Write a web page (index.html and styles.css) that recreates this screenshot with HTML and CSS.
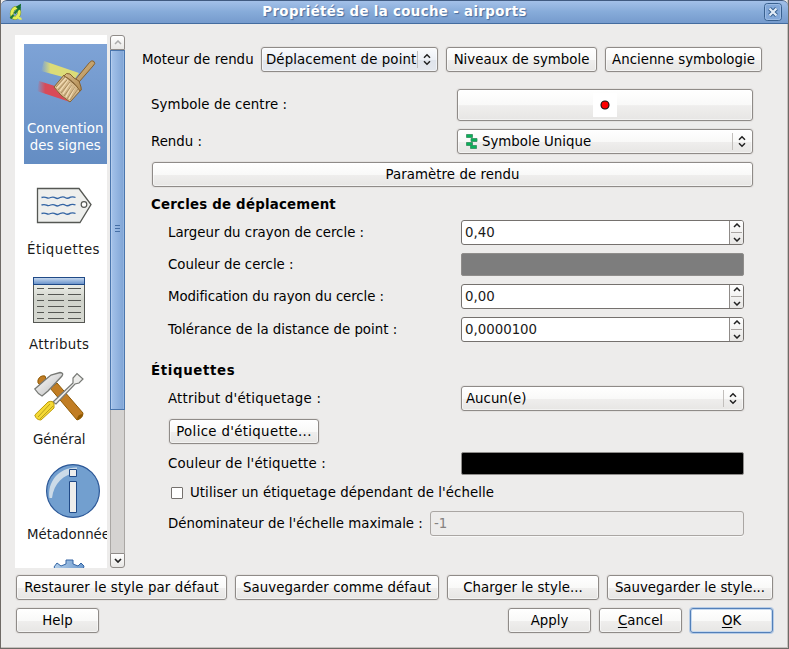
FILE: index.html
```html
<!DOCTYPE html>
<html lang="fr">
<head>
<meta charset="utf-8">
<title>Propriétés de la couche - airports</title>
<link rel="stylesheet" href="styles.css">
</head>
<body>
<div class="window">
  <header class="titlebar">
    <svg class="app-icon" width="16" height="18" viewBox="0 0 16 18"><ellipse cx="6.500" cy="10" rx="3.600" ry="5" fill="none" stroke="#65883c" stroke-width="4" transform="rotate(14 6.500 10)"/><ellipse cx="6.500" cy="10" rx="3.600" ry="5" fill="none" stroke="#e5ee55" stroke-width="3" transform="rotate(14 6.500 10)"/><path d="M8 12q2 4.500 4.500 3.500" fill="none" stroke="#e5ee55" stroke-width="2.200"/><path d="M1.500 15.500L4.500 12M5.500 10.500L11 4" stroke="#1f7a38" stroke-width="2.200"/><path d="M6.500 4L12 .8L11.500 7.500Z" fill="#126b2b"/></svg>
    <h1>Propriétés de la couche - airports</h1>
    <svg class="close" width="18" height="18" viewBox="0 0 18 18"><rect x=".5" y=".5" width="17" height="17" rx="3" fill="#83a8d9" stroke="#39608f"/><rect x="1.500" y="1.500" width="15" height="15" rx="2" fill="none" stroke="#9dbce4"/><path d="M5.500 5.500l7 7M12.500 5.500l-7 7" stroke="#38608f" stroke-width="4"/><path d="M5.500 5.500l7 7M12.500 5.500l-7 7" stroke="#e4edf8" stroke-width="2.200"/></svg>
  </header>
  <div class="body">
    <nav class="list">
      <div class="item selected">
        <svg width="60" height="44" viewBox="0 0 60 44">
          <defs><linearGradient id="y"><stop offset="0" stop-color="#dcdc78" stop-opacity="0"/><stop offset=".25" stop-color="#dcdc78"/></linearGradient><linearGradient id="r"><stop offset="0" stop-color="#d84a58" stop-opacity="0"/><stop offset=".25" stop-color="#d84a58"/></linearGradient><linearGradient id="wood" x2="1" y2="1"><stop stop-color="#d9bb88"/><stop offset="1" stop-color="#b08a52"/></linearGradient></defs>
          <path d="M8 2L43 14L38 21L5 12Z" fill="url(#y)"/><path d="M3 22L22 28L34 43L1 32Z" fill="url(#r)"/>
          <path d="M39 21L53.500 3.500Q56 .500 58 2.500T57 7L43 23Z" fill="url(#wood)" stroke="#85602e"/>
          <path d="M28 16L18 28Q24 37 34 43L45 31Z" fill="#d4b88a" stroke="#85602e"/>
          <path d="M30 19L21 29M32 21L24 32M34 24L27 35M36 26L30 38M39 28L33 40" stroke="#f3ddb6" stroke-width="1.200"/><path d="M29 18L20 28M31 21L22 31M34 23L25 34M36 26L28 37M39 28L31 40M42 30L34 41" stroke="#8b6e44" stroke-width=".6"/>
          <path d="M28 17Q30 13 34 15L38 19L43 22L45 28Q46 32 44 32Q37 21 28 17Z" fill="url(#wood)" stroke="#85602e"/>
        </svg>
        <span>Convention<br>des signes</span>
      </div>
      <div class="item labels">
        <svg width="57" height="37" viewBox="0 0 57 37"><path d="M1.500 1.500H43L55 17.500L44 35.500H1.500Z" fill="#eeefed" stroke="#555753" stroke-width="1.300"/><circle cx="48" cy="17.500" r="2.800" fill="#fff" stroke="#555753" stroke-width="1.200"/><g fill="none" stroke="#3465a4" stroke-width="1.300"><path id="w" d="M5.500 10.500q3-.8 5 .2t4-.2q3-1 5 .4t5-.6q3-1 5 .4t5-.6q3-.7 5 .4"/><use href="#w" y="7.500"/><use href="#w" y="16"/></g></svg>
        <span>Étiquettes</span>
      </div>
      <div class="item attrs">
        <svg width="52" height="46" viewBox="0 0 52 46"><defs><linearGradient id="t" x2="0" y2="1"><stop stop-color="#cbdcf0"/><stop offset="1" stop-color="#648fc9"/></linearGradient><linearGradient id="g" x2="0" y2="1"><stop stop-color="#eceee8"/><stop offset=".4" stop-color="#d0d3cb"/><stop offset="1" stop-color="#d7d9d2"/></linearGradient></defs><rect x=".5" y="7.500" width="51" height="38" fill="url(#g)" stroke="#555753"/><rect x=".5" y=".5" width="51" height="7" fill="url(#t)" stroke="#204a87"/><path d="M4 11.500h7m4 0h16m4 0h13M4 17.500h7m4 0h16m4 0h13M4 23.500h7m4 0h16m4 0h13M4 29.500h7m4 0h16m4 0h13M4 35.500h7m4 0h16m4 0h13M4 41.500h7m4 0h16m4 0h13" stroke="#555753"/></svg>
        <span>Attributs</span>
      </div>
      <div class="item general">
        <svg width="52" height="52" viewBox="0 0 52 52"><defs><linearGradient id="m" x2="1" y2="1"><stop stop-color="#fff"/><stop offset="1" stop-color="#b9b9b9"/></linearGradient></defs><path d="M16 17L23 12L49 42Q49 47 43 49Z" fill="#c17d24" stroke="#8f5902"/><path d="M43 49Q43 43 49 43Q49 47 43 49Z" fill="#8f5902"/><path d="M4 9Q6 4 11 5L12 8L6 14Q3 12 4 9Z" fill="#c17d24" stroke="#8f5902"/><path d="M.8 18L11 9L17 4L26 1.500Q30 2 28 5L14 20L8 25Q4 23 .8 18Z" fill="url(#m)" stroke="#777975" stroke-width="1.300"/><path d="M19 31L39 12L39 7L43 2.500L49 8L45 12L41 13L22 33Z" fill="#ededeb" stroke="#777975" stroke-width="1.200"/><path d="M.8 44L14 31Q19 29 20 33V37L7 49Q2 49 .8 44Z" fill="#f5d934" stroke="#bd9c08"/><path d="M4 46L16 33M6 48L19 35" stroke="#b9a01d"/></svg>
        <span>Général</span>
      </div>
      <div class="item meta">
        <svg width="54" height="54" viewBox="0 0 54 54"><circle cx="27" cy="27" r="26.400" fill="#729fcf" stroke="#2b5797" stroke-width="1.200"/><path d="M3.500 34C1 18 13 3 31 3.500V8C17 11 8 19 6 34Z" fill="#d6e1ea" opacity=".9"/><path d="M23.500 5.500h7v7h-7zM23.500 17.500h7v31h-7z" fill="#eeeeec" stroke="#204a87"/></svg>
        <span>Métadonnées</span>
      </div>
      <div class="item gear">
        <svg width="34" height="34" viewBox="0 0 34 34"><defs><linearGradient id="b"><stop stop-color="#b4cfea"/><stop offset="1" stop-color="#6795cb"/></linearGradient></defs><path d="M13 5V1H20V5L25 7L28 4L31 7L30 11L33 15V20L28 28H6L1 20V12L3 11L1 8L4 4L8 7Z" fill="url(#b)" stroke="#3465a4"/></svg>
      </div>
    </nav>
    <div class="scroll">
      <div class="sb up"><svg width="8" height="5" viewBox="0 0 8 5"><path d="M1 4L4 1L7 4" fill="none" stroke="#aaa" stroke-width="1.500"/></svg></div>
      <div class="thumb"><i></i><i></i><i></i></div>
      <div class="track"></div>
      <div class="sb down"><svg width="8" height="5" viewBox="0 0 8 5"><path d="M1 1L4 4L7 1" fill="none" stroke="#222" stroke-width="1.700"/></svg></div>
    </div>
    <main class="panel">
      <div class="row top">
        <span class="lbl">Moteur de rendu</span>
        <div class="combo tinted"><span>Déplacement de point</span><svg class="ud" width="8" height="12" viewBox="0 0 8 12"><path d="M1 4.300L4 1.300L7 4.300M1 7.700L4 10.700L7 7.700" /></svg></div>
        <button class="b-niv">Niveaux de symbole</button>
        <button class="b-anc">Ancienne symbologie</button>
      </div>
      <div class="row center"><span class="lbl">Symbole de centre :</span><button class="symbol"><span class="chip"><svg width="10" height="10" viewBox="0 0 10 10"><circle cx="5" cy="5" r="4" fill="#f00" stroke="#111" stroke-width="1.100"/></svg></span></button></div>
      <div class="row rendu"><span class="lbl">Rendu :</span>
        <div class="combo"><svg class="green" width="12" height="15" viewBox="0 0 12 15"><path d="M.5.5h6v3h-6zM5 4.500h6v3H5zM.5 8.500h6v3h-6zM4.500 11.500h6v3h-6z" fill="#08b15a" stroke="#338b5c" stroke-width=".8"/></svg><span>Symbole Unique</span><svg class="ud" width="8" height="12" viewBox="0 0 8 12"><path d="M1 4.300L4 1.300L7 4.300M1 7.700L4 10.700L7 7.700"/></svg></div></div>
      <button class="param">Paramètre de rendu</button>
      <h2 class="h-circles">Cercles de déplacement</h2>
      <div class="row sub"><span class="lbl">Largeur du crayon de cercle :</span><div class="spin"><span>0,40</span><div class="arrows"><svg width="8" height="5" viewBox="0 0 8 5"><path d="M1 4L4 1L7 4"/></svg><hr><svg width="8" height="5" viewBox="0 0 8 5"><path d="M1 1L4 4L7 1"/></svg></div></div></div>
      <div class="row sub"><span class="lbl">Couleur de cercle :</span><div class="color gray"></div></div>
      <div class="row sub modif"><span class="lbl">Modification du rayon du cercle :</span><div class="spin"><span>0,00</span><div class="arrows"><svg width="8" height="5" viewBox="0 0 8 5"><path d="M1 4L4 1L7 4"/></svg><hr><svg width="8" height="5" viewBox="0 0 8 5"><path d="M1 1L4 4L7 1"/></svg></div></div></div>
      <div class="row sub"><span class="lbl">Tolérance de la distance de point :</span><div class="spin"><span>0,0000100</span><div class="arrows"><svg width="8" height="5" viewBox="0 0 8 5"><path d="M1 4L4 1L7 4"/></svg><hr><svg width="8" height="5" viewBox="0 0 8 5"><path d="M1 1L4 4L7 1"/></svg></div></div></div>
      <h2 class="h-labels">Étiquettes</h2>
      <div class="row sub attribute"><span class="lbl">Attribut d'étiquetage :</span><div class="combo"><span>Aucun(e)</span><svg class="ud" width="8" height="12" viewBox="0 0 8 12"><path d="M1 4.300L4 1.300L7 4.300M1 7.700L4 10.700L7 7.700"/></svg></div></div>
      <button class="police">Police d'étiquette...</button>
      <div class="row sub label-color"><span class="lbl">Couleur de l'étiquette :</span><div class="color black"></div></div>
      <label class="check"><i></i><span>Utiliser un étiquetage dépendant de l'échelle</span></label>
      <div class="row sub denom"><span class="lbl">Dénominateur de l'échelle maximale :</span><div class="disabled">-1</div></div>
    </main>
  </div>
  <footer>
    <div class="row styles"><button>Restaurer le style par défaut</button><button>Sauvegarder comme défaut</button><button>Charger le style...</button><button>Sauvegarder le style...</button></div>
    <div class="row actions"><button class="help">Help</button><button>Apply</button><button><span><u>C</u>ancel</span></button><button class="ok"><span><u>O</u>K</span></button></div>
  </footer>
</div>
</body>
</html>
```
FILE: styles.css
```css
* { box-sizing: border-box; }
body { margin: 0; background: #edeceb; }
.window {
  width: 789px; height: 649px; overflow: hidden;
  display: flex; flex-direction: column;
  background: #edeceb;
  border: 1px solid #6f6a66; border-width: 0 1px 1px;
  box-shadow: inset -1px -1px #c5c1bd;
  font: 13.33px/16px "DejaVu Sans", sans-serif; color: #000;
}
.titlebar {
  height: 24px; padding: 0 6px 0 8px; flex: none;
  display: flex; align-items: center;
  background: linear-gradient(#a3c0e8, #86abd9 50%, #769bcd);
  border-top: 1px solid #405a80; border-bottom: 1px solid #446c9f;
  border-radius: 6px 6px 0 0;
}
.titlebar h1 {
  flex: 1; margin: 0; text-align: center; color: #fff; letter-spacing: .36px;
  font-size: 13.33px; font-weight: bold; text-shadow: 1px 1px 1px #4a6c9c;
}
.close { flex: none; }
.body { display: flex; height: 544px; padding: 11px 0 0 14px; flex: none; }
.list { width: 92px; height: 533px; overflow: hidden; background: #fff; padding: 9px 0 0 9px; flex: none; color: #1a1a1a; }
.item { display: flex; flex-direction: column; align-items: flex-start; white-space: nowrap; }
.item svg { display: block; flex: none; }
.selected { height: 120px; color: #fff; background: linear-gradient(#7ea3d6, #648dc3); padding: 15px 0 0 12px; }
.selected span { margin: 17px 0 0 -9px; line-height: 17px; text-align: center; letter-spacing: .06px; }
.labels { margin-top: 23px; padding-left: 12px; height: 90px; }
.labels span { margin: 18px 0 0 -9px; letter-spacing: .5px; }
.attrs { padding-left: 9px; height: 94px; }
.attrs span { margin: 14px 0 0 -4px; letter-spacing: .3px; }
.general { padding-left: 10px; height: 93px; }
.general span { margin: 9px 0 0 -1px; }
.meta { padding-left: 22px; height: 95px; }
.meta span { margin: 9px 0 0 -19px; }
.gear { padding-left: 29px; }
.scroll { width: 15px; height: 533px; margin-left: 3px; display: flex; flex-direction: column; flex: none; }
.sb { height: 15px; flex: none; border: 1px solid #8f8b88; background: linear-gradient(#fff, #e8e7e5); display: flex; align-items: center; justify-content: center; }
.up { border-radius: 3px 3px 0 0; }
.down { border-radius: 0 0 3px 3px; }
.thumb {
  height: 360px; padding-bottom: 4px; flex: none; border: 1px solid #4b76ad;
  background: linear-gradient(90deg, #a5c3ea, #7fa4d5);
  box-shadow: inset 1px 0 #b4cdee, inset -1px 0 #94b5e0;
  display: flex; flex-direction: column; gap: 2px; align-items: center; justify-content: center;
}
.thumb i { width: 5px; height: 1px; background: #456fa6; }
.track { flex: 1; border: solid #aaa7a4; border-width: 0 1px; background: #d5d3d1; }
.panel { flex: 1; padding: 12px 35px 0 26px; display: flex; flex-direction: column; min-width: 0; }
.row { display: flex; align-items: center; flex: none; }
.lbl { white-space: nowrap; }
button, .combo {
  height: 25px; padding: 0; margin: 0; flex: none;
  font: inherit; color: #000; white-space: nowrap;
  border: 1px solid #8f8b88; border-radius: 3px;
  background: linear-gradient(#fff, #f9f9f8 50%, #efeeed 52%, #e7e6e4);
  box-shadow: 0 0 0 1px #e4e2e0, inset 0 0 0 1px #ffffff80;
}
.combo { display: flex; align-items: center; padding: 0 6px 0 4px; }
.combo span { flex: 1; }
.ud { flex: none; width: 14px; padding-left: 5px; height: 17px; border-left: 1px solid #c2bfbc; overflow: visible; }
.ud path, .arrows path { fill: none; stroke: #222; stroke-width: 1.500; }
.tinted { background: linear-gradient(#fafbfd, #edf0f6 50%, #dfe4ec 52%, #e4e7ed); }
.top { margin-left: -9px; }
.top .combo { width: 177px; margin-left: auto; margin-right: 8px; letter-spacing: .1px; }
.top .lbl { width: 118px; letter-spacing: .05px; }
.b-niv { width: 151px; margin-right: 8px; }
.b-anc { width: 157px; margin-right: -9px; }
.center, .rendu { justify-content: space-between; }
.center { margin-top: 17px; height: 32px; }
.center .lbl { letter-spacing: .1px; }
.symbol { width: 296px; height: 32px; display: flex; justify-content: center; align-items: center; }
.chip { width: 24px; height: 24px; background: #fff; display: flex; align-items: center; justify-content: center; }
.rendu { margin-top: 8px; }
.rendu .combo { width: 296px; padding-left: 8px; }
.green { margin-right: 4px; }
.param { margin: 8px 0 0 1px; width: 601px; letter-spacing: .07px; }
h2 { margin: 0; font-size: 13.33px; line-height: 16px; font-weight: bold; }
.h-circles { margin-top: 10px; margin-bottom: -1px; letter-spacing: .22px; }
.sub { margin-top: 8px; padding-left: 17px; width: 593px; justify-content: space-between; }
.modif .lbl { letter-spacing: -.09px; }
.attribute .lbl { letter-spacing: .22px; }
.label-color .lbl { letter-spacing: .17px; }
.spin, .color, .attribute .combo { width: 283px; }
.spin {
  height: 25px; display: flex; align-items: center; padding-left: 3px; overflow: hidden;
  border: 1px solid #75716e; border-radius: 3px; background: #fff; color: #1a1a1a;
}
.spin span { flex: 1; }
.arrows {
  width: 14px; height: 23px; border-left: 1px solid #8f8b88;
  display: flex; flex-direction: column; justify-content: space-around; align-items: center;
  background: linear-gradient(#fff, #e7e6e4);
}
.arrows hr { width: 11px; margin: 0; border: 0; border-top: 1px solid #a9a5a2; }
.color { height: 23px; border-radius: 2px; border: 1px solid #8f8d8b; }
.gray { background: #7d7d7d; }
.black { background: #000; }
.h-labels { margin-top: 21px; margin-bottom: -1px; letter-spacing: .65px; }
.police { margin: 8px 0 0 18px; width: 150px; letter-spacing: .33px; }
.check { display: flex; align-items: center; height: 16px; margin: 10px 0 0 20px; }
.check i { width: 12px; height: 12px; border: 1px solid #75716e; border-radius: 1px; background: #fff; }
.check span { margin-left: 7px; white-space: nowrap; letter-spacing: .07px; }
.denom { margin-top: 10px; }
.disabled { width: 314px; height: 25px; line-height: 23px; padding-left: 3px; border: 1px solid #aaa6a3; border-radius: 3px; color: #858280; box-shadow: 0 1px #f8f8f7; }
footer { padding: 7px 15px 0; display: flex; flex-direction: column; gap: 8px; }
.styles { gap: 8px; }
.styles button { letter-spacing: .07px; }
.styles button:nth-child(1) { width: 211px; letter-spacing: .14px; }
.styles button:nth-child(2) { width: 204px; }
.styles button:nth-child(3) { width: 152px; }
.styles button:nth-child(4) { width: 166px; letter-spacing: 0; }
.actions { gap: 8px; }
.actions button { width: 83px; }
.actions .help { margin-right: auto; }
.actions .ok { border-color: #527fb9; box-shadow: 0 0 0 1px #b6cbe5, inset 0 0 0 1px #c5d8ee; }
u { text-underline-offset: 2px; }
```
